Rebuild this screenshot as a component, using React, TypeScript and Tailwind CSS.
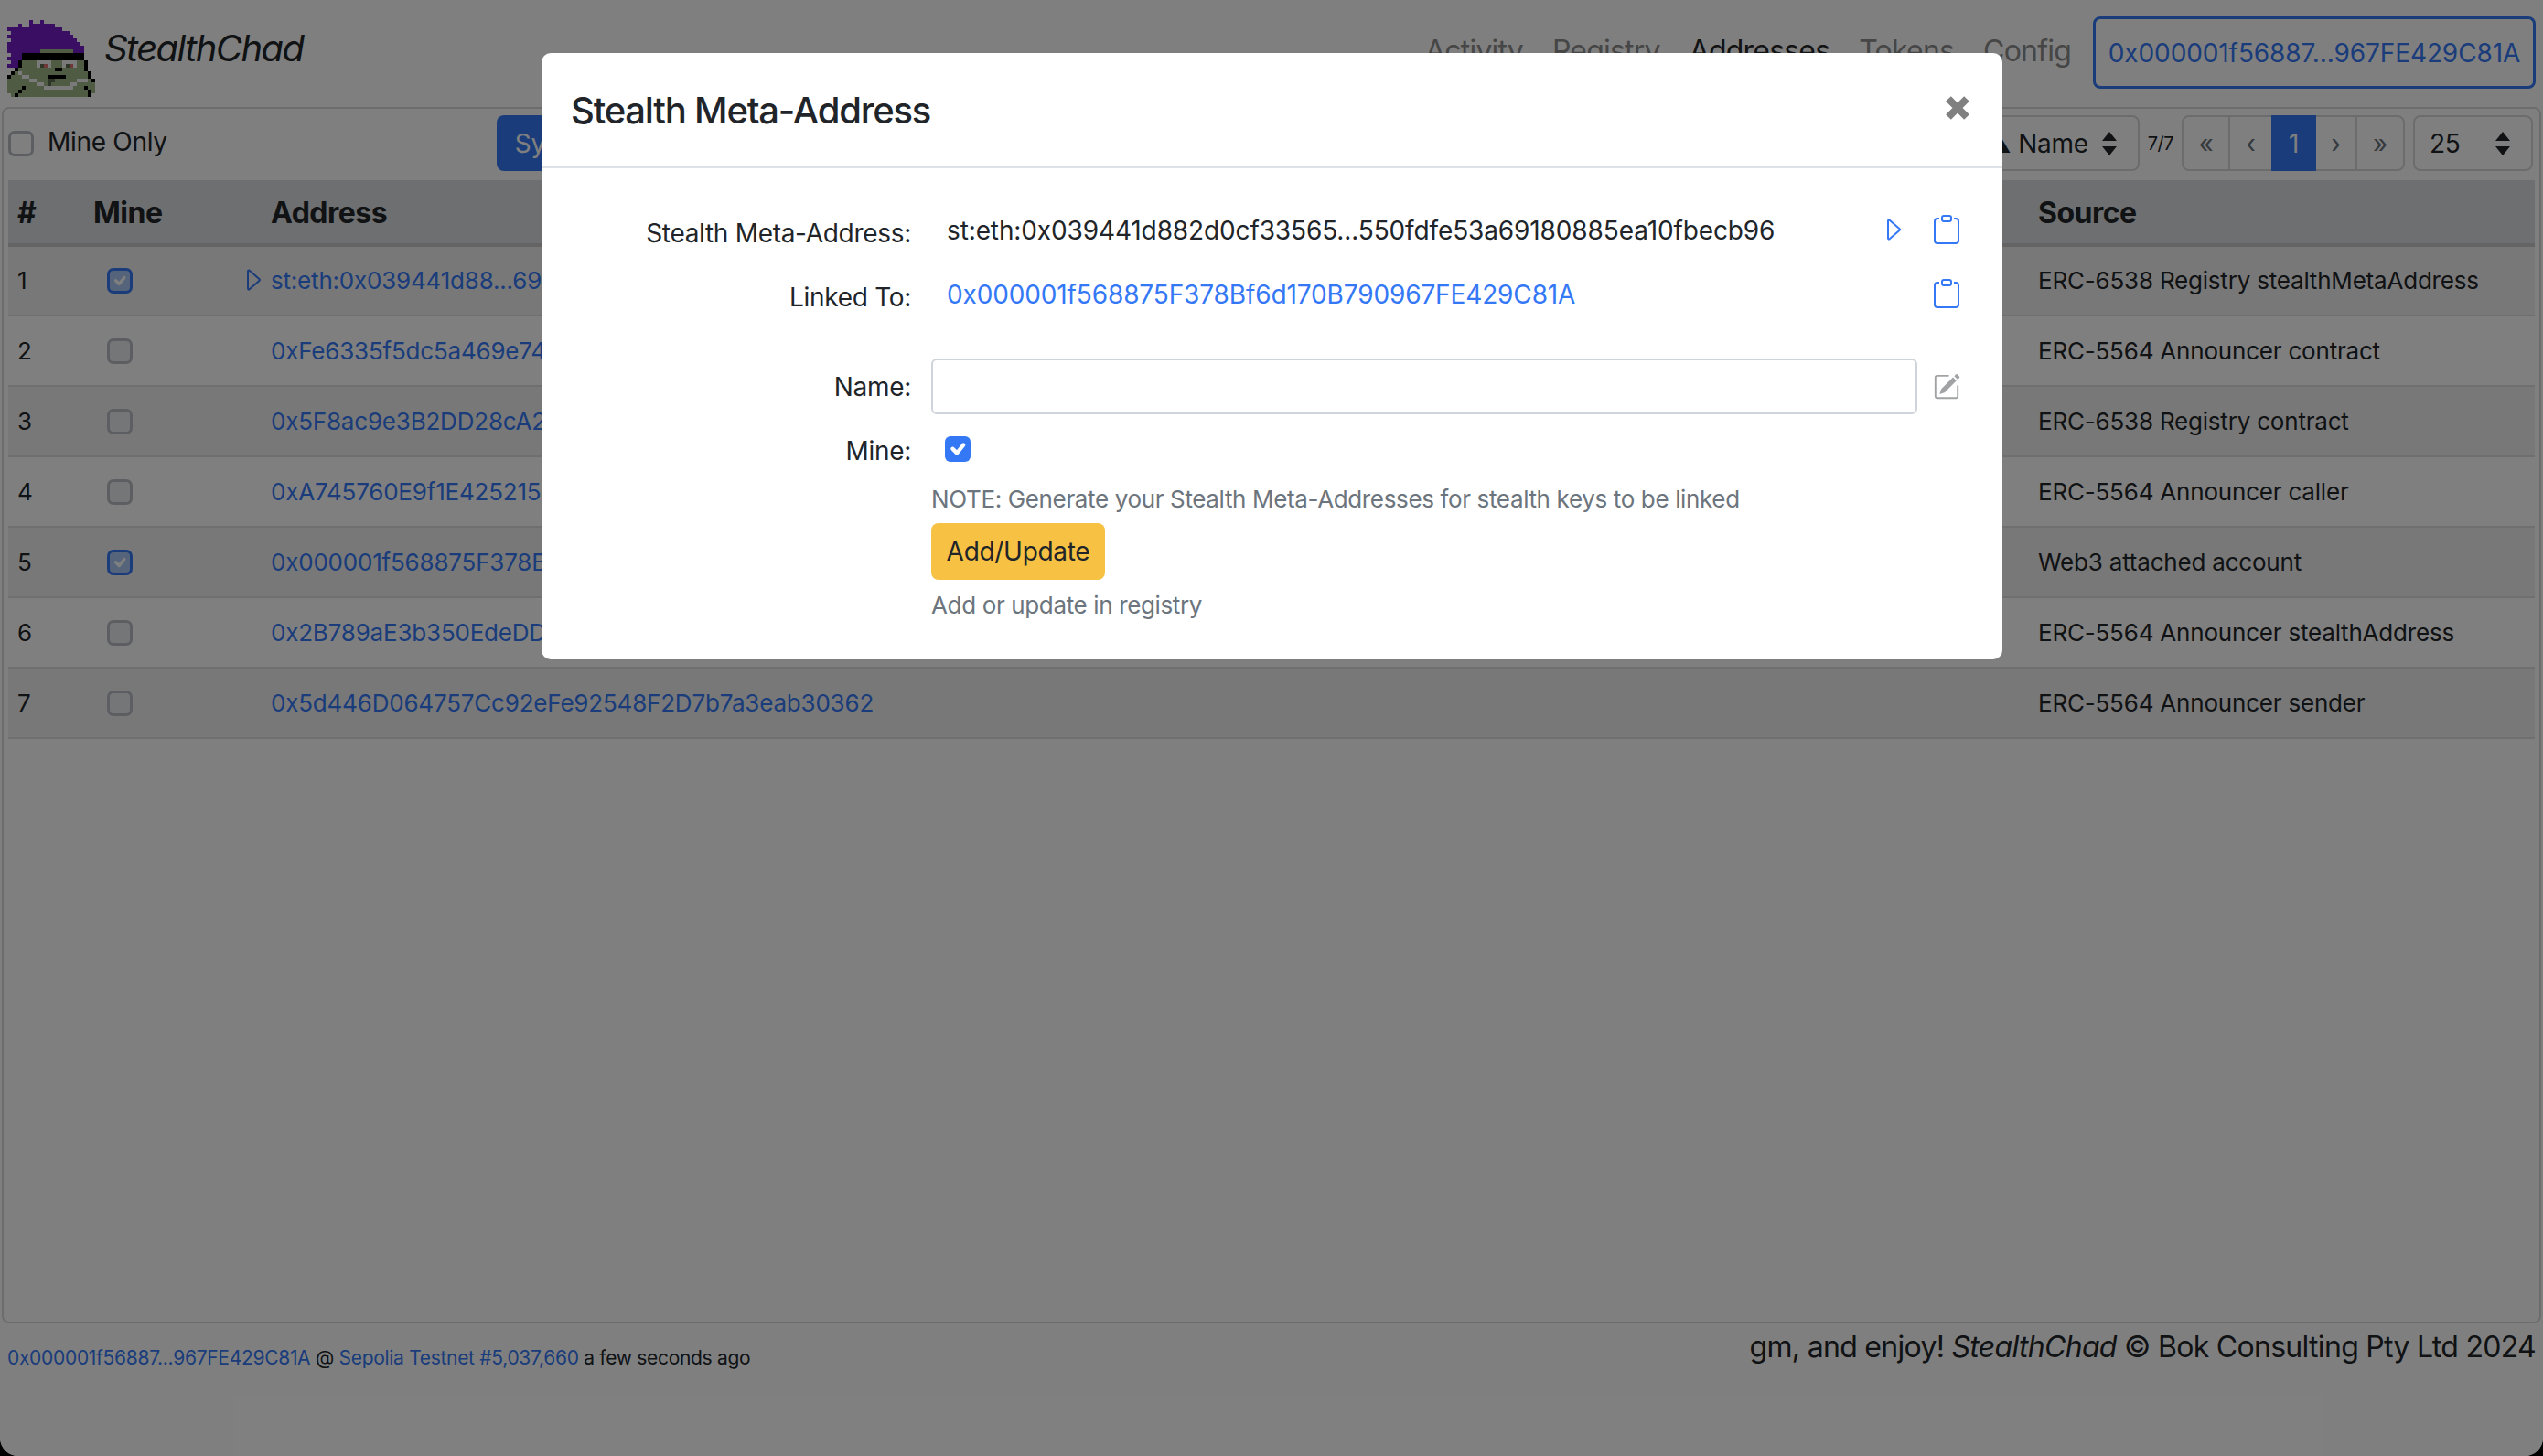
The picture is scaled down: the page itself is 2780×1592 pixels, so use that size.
import React from 'react';
import { BsCaretRight, BsClipboard, BsPencilSquare, BsCheck } from 'react-icons/bs';

const font = "font-['Inter','Noto_Sans',sans-serif]";

const logoRows = [
  '......P..P..............',
  '...P..PPPPPPP...........',
  'PPPPPPPPPPPPPPP.........',
  '.PPPPPPPPPPPPPPPP.......',
  'PPPPPPPPPPPPPPPPPP......',
  '.PPPPPPPPPPPPPPPPPP.....',
  'PPPPPPPPPPPPPPPPPPPP....',
  'PPPPPPPPPPPPPPPPPPPPP...',
  'PPPPPPPPPGGGGGGGGGPPP...',
  '.PPPKKKKKKKKKKKKKKKKK...',
  'PPPPKKKKKKKKKKKKKKKKK...',
  '.PPKGGGGWWWWGGGWWWWGGK..',
  'PPPKGGGGWDRWGGGWDRWGGK..',
  '..KGGGGGGGGGGKKGGGGGGK..',
  '.KGWGGGGGGGGGGGGGGGGGGK.',
  'KGGGWWGGGGGKKKKKGGGGGGK.',
  'GGGGGGWWGGGDDGGGGGGWWWGK',
  'GGGGGGGGWWGDGGGGGWWGGGGG',
  'GGGGKGGGGGWWWWWWWWGGGKGG',
  'GGGKGGGGGGGGGGGGGGGGGGKG',
  '.GKGGGGGGGGGGGGGGGGGGGK.',
];

const logoColors: Record<string, string> = {
  P: '#741cc4',
  K: '#000000',
  G: '#9eb886',
  W: '#f4f4f4',
  R: '#e07070',
  D: '#5c6c50',
};

const Logo = () => (
  <svg width="96" height="84" viewBox="0 0 24 21" shapeRendering="crispEdges" className="mt-[22px] ml-2 shrink-0">
    {logoRows.map((row, y) =>
      row.split('').map((c, x) => (c === '.' ? null : <rect key={`${x}-${y}`} x={x} y={y} width="1" height="1" fill={logoColors[c]} />))
    )}
  </svg>
);

const Updown = () => (
  <svg width="18" height="30" viewBox="0 0 18 30" className="shrink-0">
    <path d="M9 2 L17 12 H1 Z M9 28 L17 18 H1 Z" fill="#212529" />
  </svg>
);

// disabled look for the table rows, solid for the one in the modal
const TableCheck = ({ checked }: { checked?: boolean }) => (
  <span
    className={`flex h-[28px] w-[28px] items-center justify-center rounded-[7px] border-[3px] ${
      checked ? 'border-[#3478f6] bg-[#abc8f5]' : 'border-[#b8bcc2] bg-[#e9ecef]'
    }`}
  >
    {checked && <BsCheck className="text-white" size={28} strokeWidth={1} />}
  </span>
);

const rows = [
  { source: 'ERC-6538 Registry stealthMetaAddress', address: 'st:eth:0x039441d88...69180885ea10fbecb96', mine: true, meta: true },
  { source: 'ERC-5564 Announcer contract', address: '0xFe6335f5dc5a469e74' },
  { source: 'ERC-6538 Registry contract', address: '0x5F8ac9e3B2DD28cA2' },
  { source: 'ERC-5564 Announcer caller', address: '0xA745760E9f1E425215' },
  { source: 'Web3 attached account', address: '0x000001f568875F378Bf6d170B790967FE429C81A', mine: true },
  { source: 'ERC-5564 Announcer stealthAddress', address: '0x2B789aE3b350EdeDD' },
  { source: 'ERC-5564 Announcer sender', address: '0x5d446D064757Cc92eFe92548F2D7b7a3eab30362' },
];

const App = () => {
  return (
    <div className={`h-[1592px] w-[2780px] bg-black text-[#212529] ${font}`}>
      <div className="relative flex h-full w-full flex-col overflow-hidden rounded-b-[20px] bg-white">
        {/* navbar */}
        <div className="flex h-[117px] shrink-0 items-start">
          <Logo />
          <span className="mt-[27px] ml-[10px] text-[40px] leading-[52px] italic tracking-[-1.6px]">StealthChad</span>
          <div className="ml-auto flex items-start pt-[18px] pr-2">
            <div className="mt-[16px] mr-[24px] flex gap-[32px] text-[32px] leading-[44px] tracking-[-0.8px] text-[#8c8c8c]">
              <span>Activity</span>
              <span>Registry</span>
              <span className="text-[#262626]">Addresses</span>
              <span>Tokens</span>
              <span>Config</span>
            </div>
            <div className="flex h-[79px] w-[484px] items-center justify-center rounded-[8px] border-[3px] border-[#3478f6] text-[28px] tracking-[-0.1px] text-[#3478f6]">
              0x000001f56887...967FE429C81A
            </div>
          </div>
        </div>

        {/* main card */}
        <div className="mx-[2px] flex h-[1330px] shrink-0 flex-col rounded-[8px] border-2 border-[#d8d8d8] px-[5px] pt-[7px]">
          <div className="flex h-[61px] shrink-0 items-center pr-[2px] text-[28px] tracking-[-0.3px]">
            <span className="h-[28px] w-[28px] shrink-0 rounded-[7px] border-[3px] border-[#b8bcc2]" />
            <span className="ml-[15px] -translate-y-[2px]">Mine Only</span>
            <span className="ml-[360px] flex h-[61px] w-[120px] items-center rounded-[8px] bg-[#3478f6] pl-5 text-white">Sync</span>
            <div className="ml-auto flex items-center">
              <div className="flex h-[61px] w-[220px] items-center justify-end gap-[14px] rounded-[8px] border-2 border-[#d8d8d8] pr-[22px] pl-3">
                <span>▲ Name</span>
                <Updown />
              </div>
              <span className="mx-[9px] text-[20px] tracking-[-0.5px]">7/7</span>
              <div className="flex h-[61px] w-[244px] items-stretch rounded-[8px] border-2 border-[#d8d8d8] text-center text-[#6c757d]">
                <span className="flex w-[51px] items-center justify-center border-r-2 border-[#d8d8d8]">«</span>
                <span className="flex w-[45px] items-center justify-center">‹</span>
                <span className="-my-[2px] flex w-[49px] items-center justify-center bg-[#3478f6] text-white">1</span>
                <span className="flex w-[45px] items-center justify-center border-r-2 border-[#d8d8d8]">›</span>
                <span className="flex flex-1 items-center justify-center">»</span>
              </div>
              <div className="ml-[9px] flex h-[61px] w-[131px] items-center justify-between rounded-[8px] border-2 border-[#d8d8d8] pr-[22px] pl-4">
                <span>25</span>
                <Updown />
              </div>
            </div>
          </div>

          <table className="mt-[10px] w-full table-fixed border-collapse text-[26px] leading-[36px] tracking-[-0.2px]">
            <colgroup>
              <col className="w-[83px]" />
              <col className="w-[194px]" />
              <col />
              <col className="w-[553px]" />
            </colgroup>
            <thead>
              <tr className="h-[71px] border-b-[4px] border-[#c8c8c8] bg-[#dcdee2] text-left text-[32px] font-bold tracking-[-0.5px]">
                <th className="pt-[2px] pl-[10px]">#</th>
                <th className="pt-[2px] pl-[10px]">Mine</th>
                <th className="pt-[2px] pl-[10px]">Address</th>
                <th className="pt-[2px] pl-[10px]">Source</th>
              </tr>
            </thead>
            <tbody>
              {rows.map((row, i) => (
                <tr key={row.source} className={`h-[77px] border-b-2 border-[#dedede] ${i % 2 === 0 ? 'bg-[#f1f1f1]' : 'bg-white'}`}>
                  <td className="pl-[10px]">{i + 1}</td>
                  <td className="pl-[25px]">
                    <TableCheck checked={row.mine} />
                  </td>
                  <td className="relative pl-[10px] whitespace-nowrap text-[#3478f6]">
                    {row.meta && <BsCaretRight size={32} className="absolute top-[20px] left-[-26px]" />}
                    {row.address}
                  </td>
                  <td className="pl-[10px] whitespace-nowrap">{row.source}</td>
                </tr>
              ))}
            </tbody>
          </table>
        </div>

        {/* footer */}
        <div className="flex flex-1 items-start justify-between px-[8px]">
          <div className="mt-[23px] text-[21px] leading-[30px] tracking-[-0.3px]">
            <span className="text-[#3478f6]">0x000001f56887...967FE429C81A</span> @{' '}
            <span className="text-[#3478f6]">Sepolia Testnet #5,037,660</span> a few seconds ago
          </div>
          <div className="mt-[4px] text-[32px] leading-[44px] tracking-[-0.7px]">
            gm, and enjoy! <em>StealthChad</em> © Bok Consulting Pty Ltd 2024
          </div>
        </div>

        {/* backdrop */}
        <div className="absolute inset-0 bg-black/50" />

        {/* modal */}
        <div className="absolute top-[58px] left-[592px] flex h-[663px] w-[1597px] flex-col rounded-[10px] bg-white">
          <div className="flex h-[126px] shrink-0 items-center justify-between border-b-2 border-[#dee2e6] pr-[36px] pl-[32px]">
            <span className="translate-y-[1px] text-[40px] font-medium tracking-[-1.2px]">Stealth Meta-Address</span>
            <svg width="26" height="26" viewBox="0 0 26 26" className="-translate-y-[2px]">
              <path d="M3 3 L23 23 M23 3 L3 23" stroke="#808080" strokeWidth="8" />
            </svg>
          </div>

          <div className="flex flex-col text-[28px] tracking-[-0.3px]">
            <div className="mt-[47px] flex h-[44px] items-center">
              <span className="w-[404px] shrink-0 pt-1 text-right">Stealth Meta-Address:</span>
              <span className="ml-[39px] flex-1 -translate-y-[1px] tracking-[-0.12px]">st:eth:0x039441d882d0cf33565...550fdfe53a69180885ea10fbecb96</span>
              <BsCaretRight size={32} className="mr-[27px] -translate-y-[2px] text-[#3478f6]" />
              <BsClipboard size={32} className="mr-[45px] -translate-y-[2px] text-[#3478f6]" />
            </div>
            <div className="mt-[26px] flex h-[44px] items-center">
              <span className="w-[404px] shrink-0 pt-1 text-right">Linked To:</span>
              <span className="ml-[39px] flex-1 -translate-y-[1px] tracking-[-0.13px] text-[#3478f6]">0x000001f568875F378Bf6d170B790967FE429C81A</span>
              <BsClipboard size={32} className="mr-[45px] -translate-y-[2px] text-[#3478f6]" />
            </div>
            <div className="mt-[47px] flex h-[61px] items-center">
              <span className="w-[404px] shrink-0 text-right">Name:</span>
              <div className="ml-[22px] h-[61px] w-[1078px] rounded-[6px] border-2 border-[#ced4da]" />
              <BsPencilSquare size={30} className="ml-[17px] text-[#a0a2a4]" />
            </div>
            <div className="mt-[24px] flex h-[28px] items-center">
              <span className="w-[404px] shrink-0 translate-y-[2px] text-right">Mine:</span>
              <span className="ml-[37px] flex h-[28px] w-[28px] items-center justify-center rounded-[6px] bg-[#3478f6]">
                <BsCheck className="text-white" size={28} strokeWidth={1} />
              </span>
            </div>
            <div className="mt-[23px] ml-[426px] flex flex-col items-start">
              <span className="text-[26px] leading-[36px] tracking-[-0.36px] text-[#6c757d]">NOTE: Generate your Stealth Meta-Addresses for stealth keys to be linked</span>
              <span className="mt-[8px] flex h-[62px] w-[190px] items-center justify-center rounded-[8px] bg-[#f7c244] text-[#212529]">Add/Update</span>
              <span className="mt-[10px] text-[26px] leading-[36px] tracking-[-0.36px] text-[#6c757d]">Add or update in registry</span>
            </div>
          </div>
        </div>
      </div>
    </div>
  );
};

export default App;
